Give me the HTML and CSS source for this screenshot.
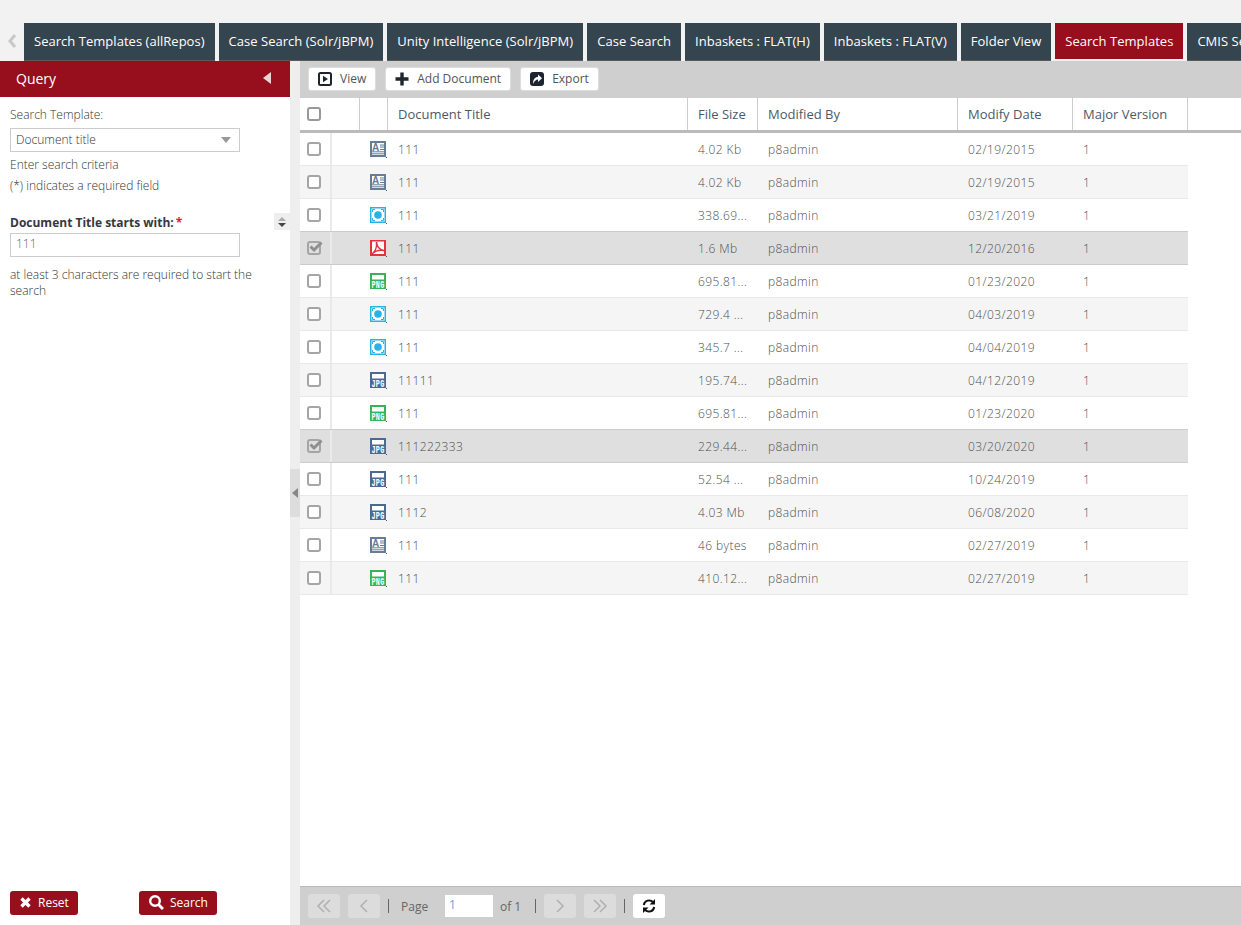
FILE: index.html
```html
<!DOCTYPE html>
<html lang="en">
<head>
  <meta charset="UTF-8" />
  <meta name="viewport" content="width=device-width, initial-scale=1.0" />
  <title>Search Templates</title>
  <link rel="stylesheet" href="styles.css">
</head>
<body>

  <svg class="defs" width="0" height="0">
    <symbol id="ic-txt" viewBox="0 0 17 17">
      <rect width="16" height="16" fill="#667d98"/>
      <rect x="2" y="2" width="12" height="12" fill="#fff"/>
      <text x="2" y="9.800" class="ic-a">A</text>
      <path d="M10 4h4M10 6h4M10 8.500h4M2 10.800h12M2 12.800h12" stroke="#667d98" stroke-width="1"/>
      <rect x="16" y="16" width="1" height="1" fill="#555"/>
    </symbol>
    <symbol id="ic-img" viewBox="0 0 17 17">
      <rect width="16" height="16" fill="#2bb0ea"/>
      <rect x="1.500" y="1.500" width="13" height="13" fill="#fff"/>
      <circle cx="8" cy="8" r="3.800" fill="#2bb0ea"/>
      <path d="M2.500 5V2.500H5M11 2.500h2.500V5M13.500 11v2.500H11M5 13.500H2.500V11" fill="none" stroke="#2bb0ea"/>
      <rect x="16" y="16" width="1" height="1" fill="#555"/>
    </symbol>
    <symbol id="ic-pdf" viewBox="0 0 17 17">
      <rect width="16" height="16" fill="#e8303f"/>
      <rect x="2" y="1.500" width="12" height="12.500" fill="#fff"/>
      <path d="M2 14C5 12 7 7 6.500 2 7 7 10 10 14 10.500 10 10 5 11 2 14Z" fill="none" stroke="#e8303f" stroke-width="1.500"/>
      <rect x="16" y="16" width="1" height="1" fill="#555"/>
    </symbol>
    <symbol id="ic-png" viewBox="0 0 17 17">
      <rect width="16" height="16" fill="#35b45a"/>
      <rect x="2" y="2" width="12" height="4.500" fill="#fff"/>
      <text x="1.500" y="14.500" class="ic-t" textLength="13" lengthAdjust="spacingAndGlyphs">PNG</text>
      <rect x="16" y="16" width="1" height="1" fill="#555"/>
    </symbol>
    <symbol id="ic-jpg" viewBox="0 0 17 17">
      <rect width="16" height="16" fill="#4a6a94"/>
      <rect x="2" y="2" width="12" height="4.500" fill="#fff"/>
      <text x="1.500" y="14.500" class="ic-t" textLength="13" lengthAdjust="spacingAndGlyphs">JPG</text>
      <rect x="16" y="16" width="1" height="1" fill="#555"/>
    </symbol>
  </svg>

  <nav class="tabbar">
    <span class="tab-prev">
      <svg width="10" height="16" viewBox="0 0 10 16"><path d="M8 2 3 8l5 6" fill="none" stroke="#c8c8c8" stroke-width="3"/></svg>
    </span>
    <a class="tab">Search Templates (allRepos)</a>
    <a class="tab">Case Search (Solr/jBPM)</a>
    <a class="tab">Unity Intelligence (Solr/jBPM)</a>
    <a class="tab">Case Search</a>
    <a class="tab">Inbaskets : FLAT(H)</a>
    <a class="tab">Inbaskets : FLAT(V)</a>
    <a class="tab">Folder View</a>
    <a class="tab active">Search Templates</a>
    <a class="tab">CMIS Search</a>
  </nav>

  <div class="layout">
    <aside class="sidebar">
      <div class="side-head">
        <span>Query</span>
        <svg width="8" height="12" viewBox="0 0 8 12"><path d="M8 0v12L0 6z" fill="#e9d6d8"/></svg>
      </div>
      <div class="side-body">
        <div class="line">Search Template:</div>
        <div class="select">
          <span>Document title</span>
          <i class="caret"></i>
        </div>
        <div class="line after-select">Enter search criteria</div>
        <div class="line after-enter">(*) indicates a required field</div>

        <div class="field-head">
          <b>Document Title starts with:</b><span class="req">*</span>
          <span class="spinner"><i class="up"></i><i class="down"></i></span>
        </div>
        <div class="textbox">111</div>
        <p class="hint">at least 3 characters are required to start the search</p>
      </div>
      <div class="side-foot">
        <button class="btn-red">
          <svg width="13" height="13" viewBox="0 0 13 13"><path d="M2.500 2.500l8 8M10.500 2.500l-8 8" stroke="#fff" stroke-width="3.400"/></svg>
          Reset
        </button>
        <button class="btn-red">
          <svg width="16" height="16" viewBox="0 0 16 16"><circle cx="7" cy="7" r="4.800" fill="none" stroke="#fff" stroke-width="2.400"/><path d="M10.500 10.500 15 15" stroke="#fff" stroke-width="3"/></svg>
          Search
        </button>
      </div>
    </aside>

    <div class="splitter">
      <div class="split-handle"><i></i></div>
    </div>

    <main class="content">
      <div class="toolbar">
        <button class="tool">
          <svg width="14" height="14" viewBox="0 0 14 14"><rect x="1" y="1" width="12" height="12" rx="1.500" fill="none" stroke="#1c2530" stroke-width="2"/><path d="M5 3.800v6.400L10 7z" fill="#1c2530"/></svg>
          View
        </button>
        <button class="tool">
          <svg width="14" height="14" viewBox="0 0 14 14"><path d="M7 0.500v13M0.500 7h13" stroke="#1c2530" stroke-width="3.400"/></svg>
          Add Document
        </button>
        <button class="tool">
          <svg width="14" height="14" viewBox="0 0 14 14"><rect width="14" height="14" rx="3" fill="#1c2530"/><path d="M3 12C3 7.500 5 5 8 5V2.500l4 3.700-4 3.700V7.500C6 7.500 4.300 9 3 12Z" fill="#fff"/></svg>
          Export
        </button>
      </div>

      <div class="grid-head">
        <div class="hc hc-check"><span class="cb"></span></div>
        <div class="hc hc-icon"></div>
        <div class="hc hc-title">Document Title</div>
        <div class="hc hc-size">File Size</div>
        <div class="hc hc-by">Modified By</div>
        <div class="hc hc-date">Modify Date</div>
        <div class="hc hc-ver">Major Version</div>
      </div>

      <div class="grid-body">
        <div class="row"><div class="c-check"><span class="cb"></span></div><div class="c-icon"><svg class="ic"><use href="#ic-txt"/></svg></div><div>111</div><div>4.02 Kb</div><div>p8admin</div><div>02/19/2015</div><div>1</div></div>
        <div class="row"><div class="c-check"><span class="cb"></span></div><div class="c-icon"><svg class="ic"><use href="#ic-txt"/></svg></div><div>111</div><div>4.02 Kb</div><div>p8admin</div><div>02/19/2015</div><div>1</div></div>
        <div class="row"><div class="c-check"><span class="cb"></span></div><div class="c-icon"><svg class="ic"><use href="#ic-img"/></svg></div><div>111</div><div>338.69...</div><div>p8admin</div><div>03/21/2019</div><div>1</div></div>
        <div class="row selected"><div class="c-check"><span class="cb on"><svg width="16" height="14" viewBox="0 0 16 14"><path d="M2.500 6.500l3.500 3.500L13.500 2.500" fill="none" stroke="#8f8f8f" stroke-width="3"/></svg></span></div><div class="c-icon"><svg class="ic"><use href="#ic-pdf"/></svg></div><div>111</div><div>1.6 Mb</div><div>p8admin</div><div>12/20/2016</div><div>1</div></div>
        <div class="row"><div class="c-check"><span class="cb"></span></div><div class="c-icon"><svg class="ic"><use href="#ic-png"/></svg></div><div>111</div><div>695.81...</div><div>p8admin</div><div>01/23/2020</div><div>1</div></div>
        <div class="row"><div class="c-check"><span class="cb"></span></div><div class="c-icon"><svg class="ic"><use href="#ic-img"/></svg></div><div>111</div><div>729.4 ...</div><div>p8admin</div><div>04/03/2019</div><div>1</div></div>
        <div class="row"><div class="c-check"><span class="cb"></span></div><div class="c-icon"><svg class="ic"><use href="#ic-img"/></svg></div><div>111</div><div>345.7 ...</div><div>p8admin</div><div>04/04/2019</div><div>1</div></div>
        <div class="row"><div class="c-check"><span class="cb"></span></div><div class="c-icon"><svg class="ic"><use href="#ic-jpg"/></svg></div><div>11111</div><div>195.74...</div><div>p8admin</div><div>04/12/2019</div><div>1</div></div>
        <div class="row"><div class="c-check"><span class="cb"></span></div><div class="c-icon"><svg class="ic"><use href="#ic-png"/></svg></div><div>111</div><div>695.81...</div><div>p8admin</div><div>01/23/2020</div><div>1</div></div>
        <div class="row selected"><div class="c-check"><span class="cb on"><svg width="16" height="14" viewBox="0 0 16 14"><path d="M2.500 6.500l3.500 3.500L13.500 2.500" fill="none" stroke="#8f8f8f" stroke-width="3"/></svg></span></div><div class="c-icon"><svg class="ic"><use href="#ic-jpg"/></svg></div><div>111222333</div><div>229.44...</div><div>p8admin</div><div>03/20/2020</div><div>1</div></div>
        <div class="row"><div class="c-check"><span class="cb"></span></div><div class="c-icon"><svg class="ic"><use href="#ic-jpg"/></svg></div><div>111</div><div>52.54 ...</div><div>p8admin</div><div>10/24/2019</div><div>1</div></div>
        <div class="row"><div class="c-check"><span class="cb"></span></div><div class="c-icon"><svg class="ic"><use href="#ic-jpg"/></svg></div><div>1112</div><div>4.03 Mb</div><div>p8admin</div><div>06/08/2020</div><div>1</div></div>
        <div class="row"><div class="c-check"><span class="cb"></span></div><div class="c-icon"><svg class="ic"><use href="#ic-txt"/></svg></div><div>111</div><div>46 bytes</div><div>p8admin</div><div>02/27/2019</div><div>1</div></div>
        <div class="row"><div class="c-check"><span class="cb"></span></div><div class="c-icon"><svg class="ic"><use href="#ic-png"/></svg></div><div>111</div><div>410.12...</div><div>p8admin</div><div>02/27/2019</div><div>1</div></div>
      </div>

      <div class="pager">
        <span class="pg">
          <svg width="16" height="14" viewBox="0 0 16 14"><path d="M8 1 2 7l6 6M14 1 8 7l6 6" fill="none" stroke="#b0b0b0" stroke-width="1.500"/></svg>
        </span>
        <span class="pg">
          <svg width="10" height="14" viewBox="0 0 10 14"><path d="M8 1 2 7l6 6" fill="none" stroke="#b0b0b0" stroke-width="1.500"/></svg>
        </span>
        <i class="sep"></i>
        <span class="pg-label">Page</span>
        <span class="pg-input">1</span>
        <span class="pg-of">of 1</span>
        <i class="sep"></i>
        <span class="pg">
          <svg width="10" height="14" viewBox="0 0 10 14"><path d="M2 1l6 6-6 6" fill="none" stroke="#b0b0b0" stroke-width="1.500"/></svg>
        </span>
        <span class="pg">
          <svg width="16" height="14" viewBox="0 0 16 14"><path d="M2 1l6 6-6 6M8 1l6 6-6 6" fill="none" stroke="#b0b0b0" stroke-width="1.500"/></svg>
        </span>
        <i class="sep"></i>
        <span class="pg pg-refresh">
          <svg width="14" height="14" viewBox="0 0 14 14"><path d="M1.800 6A5.300 5.300 0 0 1 11 3.200M12.200 8A5.300 5.300 0 0 1 3 10.800" fill="none" stroke="#111" stroke-width="2"/><path d="M13 0v5.500H7.500zM1 14V8.500h5.500z" fill="#111"/></svg>
        </span>
      </div>
    </main>
  </div>

</body>
</html>
```

FILE: styles.css
```css
html, body {
  height: 100%;
}

body {
  margin: 0;
  height: 925px;
  overflow: hidden;
  display: flex;
  flex-direction: column;
  font-family: 'Open Sans', sans-serif;
  font-size: 12px;
  color: #4b4b4b;
  background: #f2f2f2;
}

.defs {
  display: none;
}

.ic-a {
  font-family: 'Liberation Sans', sans-serif;
  font-size: 10px;
  font-weight: bold;
  fill: #667d98;
}

.ic-t {
  font-family: 'Liberation Mono', monospace;
  font-size: 10.500px;
  font-weight: bold;
  fill: #fff;
}

/* tabs */
.tabbar {
  flex: none;
  height: 38px;
  padding-top: 23px;
  display: flex;
  gap: 4px;
  overflow: hidden;
  white-space: nowrap;
}

.tab-prev {
  flex: none;
  width: 20px;
  display: flex;
  align-items: center;
  justify-content: center;
  padding-left: 4px;
  box-sizing: border-box;
  height: 36px;
}

.tab {
  flex: none;
  padding: 0 10px;
  line-height: 36px;
  height: 38px;
  box-sizing: border-box;
  font-size: 13px;
  letter-spacing: .03px;
  color: #fff;
  background: #35454f;
  border-bottom: 1px solid #5a5a5a;
}

.tab.active {
  background: #970e1c;
  height: 36px;
  border-bottom: 0;
}

/* main split */
.layout {
  flex: 1;
  display: flex;
  min-height: 0;
  background: #fff;
}

.sidebar {
  flex: none;
  width: 290px;
  display: flex;
  flex-direction: column;
}

.side-head {
  height: 36px;
  box-sizing: border-box;
  padding: 0 19px 2px 16px;
  display: flex;
  align-items: center;
  justify-content: space-between;
  background: #970e1c;
  color: #fff;
  font-size: 14px;
}

.side-body {
  flex: 1;
  padding: 9px 10px 0;
  position: relative;
  font-weight: 300;
  color: #333;
}

.line {
  line-height: 18px;
  font-size: 12px;
}

.select {
  width: 230px;
  height: 24px;
  box-sizing: border-box;
  margin-top: 4px;
  padding: 0 6px 2px 5px;
  border: 1px solid #ccc;
  display: flex;
  align-items: center;
  justify-content: space-between;
}

.caret {
  border-left: 5px solid transparent;
  border-right: 5px solid transparent;
  border-top: 6px solid #999;
  margin: 2px 2px 0 0;
}

.after-select {
  margin-top: 4px;
}

.after-enter {
  margin-top: 3px;
}

.field-head {
  margin-top: 18px;
  display: flex;
  align-items: center;
  height: 18px;
  color: #37373f;
}

.field-head b {
  font-weight: 700;
}

.req {
  color: #e51c23;
  font-weight: 700;
  margin-left: 2px;
}

.spinner {
  position: absolute;
  left: 274px;
  top: 116px;
  width: 16px;
  height: 17px;
  background: #eee;
  display: flex;
  flex-direction: column;
  align-items: center;
  justify-content: center;
  gap: 2px;
}

.spinner .up {
  border-left: 4px solid transparent;
  border-right: 4px solid transparent;
  border-bottom: 4px solid #aaa;
}

.spinner .down {
  border-left: 4px solid transparent;
  border-right: 4px solid transparent;
  border-top: 4px solid #444;
}

.textbox {
  width: 230px;
  height: 24px;
  box-sizing: border-box;
  margin-top: 2px;
  padding-left: 5px;
  line-height: 20px;
  border: 1px solid #ccc;
  color: #666;
}

.hint {
  margin: 10px 0 0;
  line-height: 16px;
  font-size: 12px;
}

.side-foot {
  display: flex;
  gap: 61px;
  padding: 0 10px 10px;
}

.btn-red {
  height: 24px;
  padding: 0 9px 2px;
  display: flex;
  align-items: center;
  gap: 6px;
  border: 0;
  border-radius: 3px;
  background: #970e1c;
  color: #fff;
  font: 12px 'Open Sans', sans-serif;
}

.splitter {
  flex: none;
  width: 10px;
  background: #eee;
  display: flex;
  align-items: center;
}

.split-handle {
  width: 10px;
  height: 48px;
  background: #ddd;
  display: flex;
  align-items: center;
  justify-content: center;
}

.split-handle i {
  border-top: 5px solid transparent;
  border-bottom: 5px solid transparent;
  border-right: 6px solid #888;
}

.content {
  flex: 1;
  min-width: 0;
  display: flex;
  flex-direction: column;
}

.toolbar {
  flex: none;
  height: 37px;
  box-sizing: border-box;
  padding: 6px 8px 0;
  display: flex;
  gap: 9px;
  background: #cfcfcf;
}

.tool {
  height: 24px;
  padding: 0 9px 2px;
  display: flex;
  align-items: center;
  gap: 8px;
  border: 1px solid #ddd;
  border-radius: 3px;
  background: #fff;
  color: #555;
  font: 12px 'Open Sans', sans-serif;
}

.tool svg {
  margin-top: 2px;
}

/* grid */
.grid-head {
  flex: none;
  height: 35px;
  box-sizing: border-box;
  display: flex;
  border-bottom: 3px solid #bbb;
  color: #4d5a66;
  font-size: 13px;
}

.hc {
  box-sizing: border-box;
  padding-left: 10px;
  line-height: 32px;
  border-right: 1px solid #ccc;
}

.hc-check { width: 60px; padding-left: 7px; display: flex; align-items: center; }
.hc-icon { width: 28px; }
.hc-title { width: 300px; }
.hc-size { width: 70px; }
.hc-by { width: 200px; }
.hc-date { width: 115px; }
.hc-ver { width: 115px; }

.grid-body {
  flex: 1;
  min-height: 0;
}

.row {
  width: 888px;
  height: 33px;
  box-sizing: border-box;
  display: grid;
  grid-template-columns: 32px 56px 300px 70px 200px 115px 115px;
  align-items: center;
  border-bottom: 1px solid #e8e8e8;
  color: #4f4f4f;
  font-weight: 300;
  letter-spacing: .4px;
}

.row > div {
  padding-left: 10px;
  white-space: nowrap;
  overflow: hidden;
}

.row:nth-child(even) {
  background: #f5f5f5;
}

.row.selected {
  background: #dfdfdf;
  border-bottom-color: #ccc;
  box-shadow: 0 -1px 0 #ccc;
}

.row > .c-check {
  padding-left: 7px;
  height: 100%;
  box-sizing: border-box;
  display: flex;
  align-items: center;
  border-right: 2px solid #eaeaea;
}

.row > .c-icon {
  padding-left: 38px;
  height: 100%;
  display: flex;
  align-items: center;
}

.ic {
  width: 17px;
  height: 17px;
  flex: none;
}

.cb {
  position: relative;
  display: block;
  width: 14px;
  height: 14px;
  box-sizing: border-box;
  border: 2px solid #999;
  border-radius: 3px;
  background: #fff;
}

.row .cb {
  border-color: #a5a5a5;
}

.cb.on {
  background: transparent;
}

.cb svg {
  position: absolute;
  left: -1px;
  top: -3px;
}

/* pager */
.pager {
  flex: none;
  height: 39px;
  box-sizing: border-box;
  padding: 0 8px;
  display: flex;
  align-items: center;
  background: #cfcfcf;
  border-top: 1px solid #bbb;
  color: #666;
}

.pg {
  width: 32px;
  height: 24px;
  display: flex;
  align-items: center;
  justify-content: center;
  margin-right: 8px;
  border-radius: 3px;
  background: #dcdcdc;
}

.pg-refresh {
  margin: 0 0 0 8px;
  background: #fff;
}

.sep {
  width: 1px;
  height: 14px;
  background: #666;
}

.pager .sep + .pg {
  margin-left: 8px;
}

.pg-label {
  margin-left: 12px;
  width: 44px;
}

.pg-input {
  width: 48px;
  height: 22px;
  box-sizing: border-box;
  padding-left: 4px;
  line-height: 20px;
  background: #fff;
  color: #6aa1d8;
}

.pg-of {
  margin-left: 7px;
  width: 35px;
}
```
